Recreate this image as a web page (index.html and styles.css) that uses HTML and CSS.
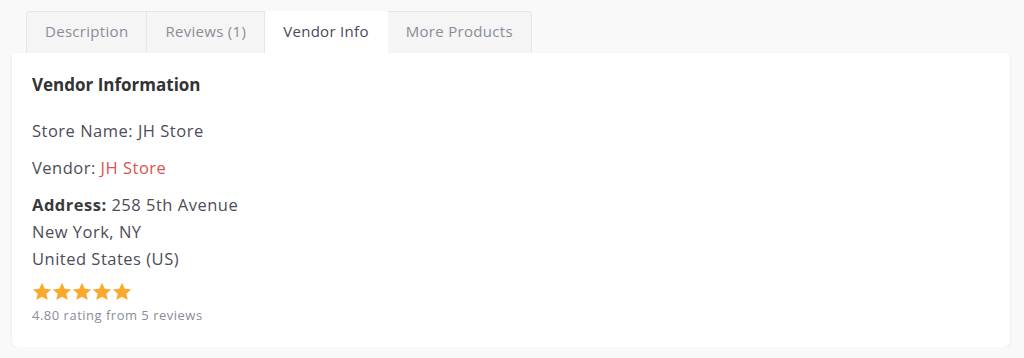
FILE: index.html
```html
<!DOCTYPE html>
<html lang="en">
<head>
    <meta charset="UTF-8">
    <title>Vendor Info</title>
    <link rel="stylesheet" href="styles.css">
</head>
<body>
    <div class="product-tabs">
        <ul class="tabs">
            <li class="tab">Description</li>
            <li class="tab">Reviews (1)</li>
            <li class="tab active">Vendor Info</li>
            <li class="tab">More Products</li>
        </ul>
        <div class="panel">
            <h2>Vendor Information</h2>
            <p>Store Name: JH Store</p>
            <p>Vendor: <a href="#">JH Store</a></p>
            <p class="address"><strong>Address:</strong> 258 5th Avenue<br>New York, NY<br>United States (US)</p>
            <div class="stars">
                <svg viewBox="0 0 100 20" width="100" height="20">
                    <defs>
                        <path id="star" d="M10 0.8l2.7 6 6.5.6-4.9 4.3 1.5 6.4L10 14.8l-5.8 3.3 1.5-6.4L.8 7.4l6.5-.6z"/>
                    </defs>
                    <use href="#star" x="0"/>
                    <use href="#star" x="20"/>
                    <use href="#star" x="40"/>
                    <use href="#star" x="60"/>
                    <use href="#star" x="80"/>
                </svg>
            </div>
            <div class="rating-text">4.80 rating from 5 reviews</div>
        </div>
    </div>
</body>
</html>
```

FILE: styles.css
```css
body {
    margin: 0;
    padding: 11px 14px 0 12px;
    background: #f9f9f9;
    font-family: "Open Sans", sans-serif;
    color: #4d4d57;
}
.tabs {
    display: flex;
    list-style: none;
    margin: 0 0 0 14px;
    padding: 0;
}
.tab {
    padding: 0 18px;
    height: 41px;
    line-height: 38px;
    font-size: 15px;
    letter-spacing: 0.3px;
    color: #8a8d99;
    background: #f5f5f5;
    border: 1px solid #e6e6e6;
    border-bottom: none;
    border-left: none;
}
.tab:first-child {
    border-left: 1px solid #e6e6e6;
    border-radius: 4px 0 0 0;
}
.tab:last-child {
    border-radius: 0 4px 0 0;
}
.tab.active {
    background: #fff;
    color: #4a4a55;
    border-color: #fff;
    border-radius: 4px 4px 0 0;
}
.panel {
    background: #fff;
    border-radius: 0 4px 6px 6px;
    box-shadow: 0 1px 3px rgba(0, 0, 0, 0.08);
    padding: 20px 20px 22px 20px;
    height: 252px;
    box-sizing: content-box;
}
.panel h2 {
    margin: 0 0 21px;
    font-size: 17px;
    font-weight: 700;
    color: #333;
}
.panel p {
    margin: 0 0 10px;
    font-size: 16.5px;
    letter-spacing: 0.5px;
    line-height: 27px;
}
.panel a {
    color: #d9534f;
    text-decoration: none;
}
.panel strong {
    color: #3a3a3a;
}
.address {
    margin-bottom: 10px !important;
}
.stars svg {
    display: block;
    fill: #fca82a;
}
.rating-text {
    font-size: 13px;
    letter-spacing: 0.5px;
    color: #8a8d99;
    margin-top: 4px;
}
```
